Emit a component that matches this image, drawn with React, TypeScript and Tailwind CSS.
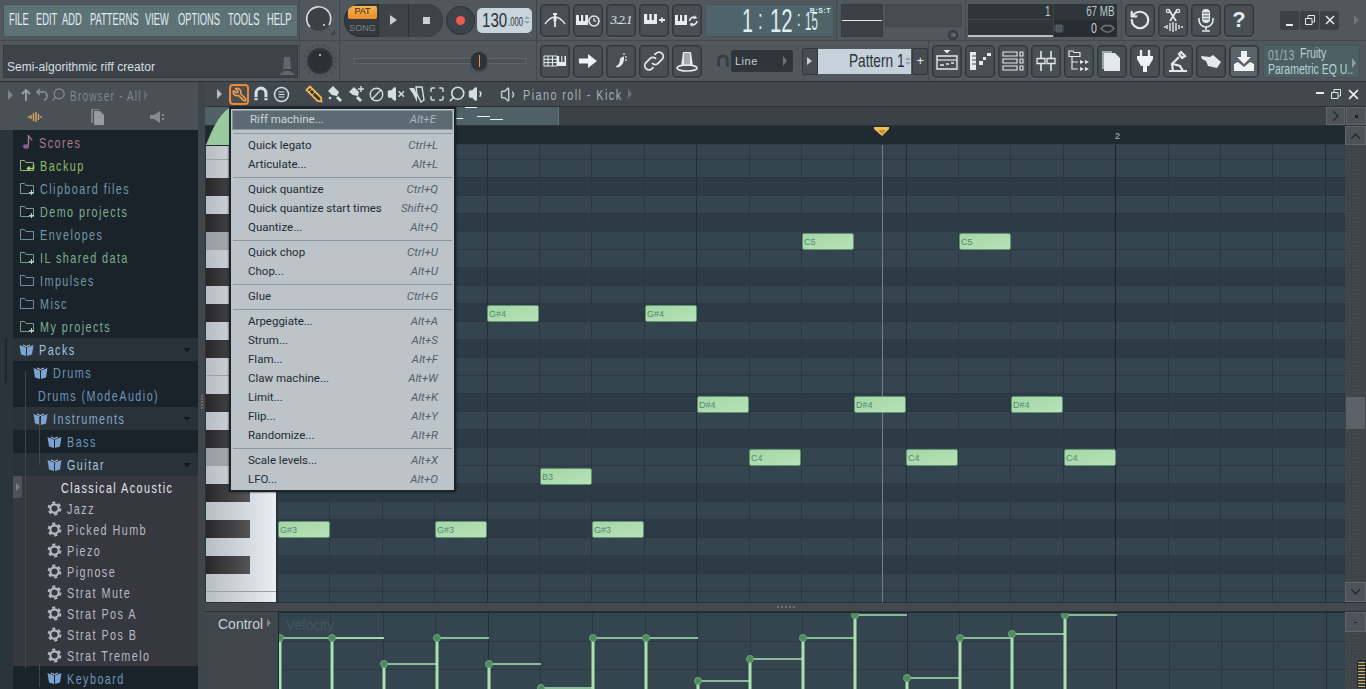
import React from "react";
import { Ban, Maximize, RotateCcw, Search, Volume1, VolumeX, Wrench } from "lucide-react";

const SANS = "font-['Liberation_Sans',Arial,sans-serif]";
const TREE_TEXT = `${SANS} inline-block origin-left whitespace-nowrap scale-x-[.72] text-[15px] tracking-[2px]`;

const MENU_BAR = [
  { label: "FILE", w: "w-[27px]" },
  { label: "EDIT", w: "w-[26px]" },
  { label: "ADD", w: "w-[28px]" },
  { label: "PATTERNS", w: "w-[55px]" },
  { label: "VIEW", w: "w-[33px]" },
  { label: "OPTIONS", w: "w-[50px]" },
  { label: "TOOLS", w: "w-[39px]" },
  { label: "HELP", w: "w-[28px]" },
];

type TreeKind = "score" | "backup" | "folder" | "folderPlus" | "pack" | "preset";

const TREE: { label: string; kind: TreeKind; pad: string; color: string; bg: string; h: string; open?: boolean }[] = [
  { label: "Scores", kind: "score", pad: "pl-[7px]", color: "text-[#b07a90]", bg: "bg-[#1a2329]", h: "h-[24px]" },
  { label: "Backup", kind: "backup", pad: "pl-[7px]", color: "text-[#8fbb6c]", bg: "bg-[#1a2329]", h: "h-[23px]" },
  { label: "Clipboard files", kind: "folderPlus", pad: "pl-[7px]", color: "text-[#7397a8]", bg: "bg-[#1a2329]", h: "h-[23px]" },
  { label: "Demo projects", kind: "folderPlus", pad: "pl-[7px]", color: "text-[#7fae90]", bg: "bg-[#1a2329]", h: "h-[23px]" },
  { label: "Envelopes", kind: "folder", pad: "pl-[7px]", color: "text-[#7397a8]", bg: "bg-[#1a2329]", h: "h-[23px]" },
  { label: "IL shared data", kind: "folderPlus", pad: "pl-[7px]", color: "text-[#7fae90]", bg: "bg-[#1a2329]", h: "h-[23px]" },
  { label: "Impulses", kind: "folder", pad: "pl-[7px]", color: "text-[#7397a8]", bg: "bg-[#1a2329]", h: "h-[23px]" },
  { label: "Misc", kind: "folder", pad: "pl-[7px]", color: "text-[#7397a8]", bg: "bg-[#1a2329]", h: "h-[23px]" },
  { label: "My projects", kind: "folderPlus", pad: "pl-[7px]", color: "text-[#7fae90]", bg: "bg-[#1a2329]", h: "h-[23px]" },
  { label: "Packs", kind: "pack", pad: "pl-[6px]", color: "text-[#a4c3df]", bg: "bg-[#283238]", h: "h-[23px]", open: true },
  { label: "Drums", kind: "pack", pad: "pl-[20px]", color: "text-[#6f93bd]", bg: "bg-[#1a2329]", h: "h-[23px]" },
  { label: "Drums (ModeAudio)", kind: "pack", pad: "pl-[20px]", color: "text-[#6f93bd]", bg: "bg-[#1a2329]", h: "h-[23px]" },
  { label: "Instruments", kind: "pack", pad: "pl-[20px]", color: "text-[#85a8ca]", bg: "bg-[#283238]", h: "h-[23px]", open: true },
  { label: "Bass", kind: "pack", pad: "pl-[34px]", color: "text-[#6f93bd]", bg: "bg-[#1a2329]", h: "h-[23px]" },
  { label: "Guitar", kind: "pack", pad: "pl-[34px]", color: "text-[#a4c3df]", bg: "bg-[#283238]", h: "h-[23px]", open: true },
  { label: "Classical Acoustic", kind: "preset", pad: "pl-[43px]", color: "text-[#e4e6ea]", bg: "bg-[#36373f]", h: "h-[22px]" },
  { label: "Jazz", kind: "preset", pad: "pl-[34px]", color: "text-[#b6bac2]", bg: "bg-[#36373f]", h: "h-[21px]" },
  { label: "Picked Humb", kind: "preset", pad: "pl-[34px]", color: "text-[#b6bac2]", bg: "bg-[#36373f]", h: "h-[21px]" },
  { label: "Piezo", kind: "preset", pad: "pl-[34px]", color: "text-[#b6bac2]", bg: "bg-[#36373f]", h: "h-[21px]" },
  { label: "Pignose", kind: "preset", pad: "pl-[34px]", color: "text-[#b6bac2]", bg: "bg-[#36373f]", h: "h-[21px]" },
  { label: "Strat Mute", kind: "preset", pad: "pl-[34px]", color: "text-[#b6bac2]", bg: "bg-[#36373f]", h: "h-[21px]" },
  { label: "Strat Pos A", kind: "preset", pad: "pl-[34px]", color: "text-[#b6bac2]", bg: "bg-[#36373f]", h: "h-[21px]" },
  { label: "Strat Pos B", kind: "preset", pad: "pl-[34px]", color: "text-[#b6bac2]", bg: "bg-[#36373f]", h: "h-[21px]" },
  { label: "Strat Tremelo", kind: "preset", pad: "pl-[34px]", color: "text-[#b6bac2]", bg: "bg-[#36373f]", h: "h-[21px]" },
  { label: "Keyboard", kind: "pack", pad: "pl-[34px]", color: "text-[#6f93bd]", bg: "bg-[#1a2329]", h: "h-[24px]" },
];

const RIFF_MENU: ({ label: string; keys: string; active?: boolean } | null)[] = [
  { label: "Riff machine...", keys: "Alt+E", active: true },
  null,
  { label: "Quick legato", keys: "Ctrl+L" },
  { label: "Articulate...", keys: "Alt+L" },
  null,
  { label: "Quick quantize", keys: "Ctrl+Q" },
  { label: "Quick quantize start times", keys: "Shift+Q" },
  { label: "Quantize...", keys: "Alt+Q" },
  null,
  { label: "Quick chop", keys: "Ctrl+U" },
  { label: "Chop...", keys: "Alt+U" },
  null,
  { label: "Glue", keys: "Ctrl+G" },
  null,
  { label: "Arpeggiate...", keys: "Alt+A" },
  { label: "Strum...", keys: "Alt+S" },
  { label: "Flam...", keys: "Alt+F" },
  { label: "Claw machine...", keys: "Alt+W" },
  { label: "Limit...", keys: "Alt+K" },
  { label: "Flip...", keys: "Alt+Y" },
  { label: "Randomize...", keys: "Alt+R" },
  null,
  { label: "Scale levels...", keys: "Alt+X" },
  { label: "LFO...", keys: "Alt+O" },
];

const KEYS = ["F5", "E5", "D#5", "D5", "C#5", "C5", "B4", "A#4", "A4", "G#4", "G4", "F#4", "F4", "E4", "D#4", "D4", "C#4", "C4", "B3", "A#3", "A3", "G#3", "G3", "F#3", "F3", "E3"];

const NOTES = [
  { n: "C5", x: 524, y: 88 }, { n: "C5", x: 681, y: 88 },
  { n: "G#4", x: 209, y: 160 }, { n: "G#4", x: 367, y: 160 },
  { n: "D#4", x: 419, y: 251 }, { n: "D#4", x: 576, y: 251 }, { n: "D#4", x: 733, y: 251 },
  { n: "C4", x: 471, y: 304 }, { n: "C4", x: 628, y: 304 }, { n: "C4", x: 786, y: 304 },
  { n: "B3", x: 262, y: 323 },
  { n: "G#3", x: 0, y: 376 }, { n: "G#3", x: 157, y: 376 }, { n: "G#3", x: 314, y: 376 },
];

// note x, stem top, end of the level line (velocity lane coordinates)
const VELOCITY = [
  [1, 25, 105], [53, 25, 105], [105, 51, 157], [158, 25, 210], [210, 51, 262], [262, 75, 314], [314, 25, 367],
  [367, 25, 419], [419, 68, 471], [471, 46, 524], [524, 25, 576], [576, 2, 628], [628, 65, 681], [681, 25, 733],
  [733, 21, 786], [786, 2, 838],
];

const COLS = Array.from({ length: 21 }, (_, i) => i);

function Squeezed({ children, className }: { children: React.ReactNode; className: string }) {
  return <span className={`${SANS} inline-block origin-left whitespace-nowrap ${className}`}>{children}</span>;
}

function ToolBtn({ children, light }: { children: React.ReactNode; light?: boolean }) {
  return (
    <div className={`flex h-[33px] w-[30px] shrink-0 items-center justify-center rounded-[4px] border border-[#31383d] shadow-[inset_0_0_0_1px_#3c4349,0_1px_0_#5d656b] ${light ? "bg-[#5a6469]" : "bg-[#484f55]"}`}>
      {children}
    </div>
  );
}

function Ico({ children, size = 24 }: { children: React.ReactNode; size?: number }) {
  return (
    <svg width={size} height={size} viewBox="0 0 24 24" fill="none" stroke="#e2eaec" strokeWidth="2">
      {children}
    </svg>
  );
}

function KeysGlyph({ x, y, w = 13 }: { x: number; y: number; w?: number }) {
  return (
    <g stroke="none">
      <rect x={x} y={y} width={w} height="10" fill="#e6edef" />
      <rect x={x + w * 0.25} y={y} width="2" height="6" fill="#3c4349" />
      <rect x={x + w * 0.6} y={y} width="2" height="6" fill="#3c4349" />
    </g>
  );
}

function Magnet({ size = 20, color = "#cfe0e8" }: { size?: number; color?: string }) {
  return (
    <svg width={size} height={size} viewBox="0 0 20 20" fill="none">
      <path d="M4.5 17V9a5.5 5.5 0 0 1 11 0v8" stroke={color} strokeWidth="3.4" />
      <path d="M2.8 14h3.4M13.8 14h3.4" stroke="#2e3439" strokeWidth="1" />
    </svg>
  );
}

function TreeIcon({ kind }: { kind: TreeKind }) {
  if (kind === "score")
    return (
      <svg width="14" height="16" viewBox="0 0 14 16" fill="none">
        <path d="M8.5 1v10.5" stroke="#b07a90" strokeWidth="1.4" />
        <path d="M8.5 1.5c1 2.5 3 3 3.5 5" stroke="#b07a90" strokeWidth="1.2" />
        <ellipse cx="6" cy="12.5" rx="3" ry="2.2" fill="#8a5c8c" />
      </svg>
    );
  if (kind === "pack")
    return (
      <svg width="15" height="12" viewBox="0 0 15 12">
        <path d="M0.5 1 7 3.5V12L2 10.5ZM14.5 1 8 3.5V12l5-1.5Z" fill="#7ba3d0" />
        <path d="M4 1.5 7.5 3 11 1.5V0.5L7.5 2 4 0.5Z" fill="#b9d2ea" />
      </svg>
    );
  if (kind === "preset")
    return (
      <svg width="15" height="15" viewBox="0 0 16 16" fill="none" stroke="#b8bcc4">
        <circle cx="8" cy="8" r="4.4" strokeWidth="2.2" />
        <circle cx="8" cy="8" r="6.4" strokeWidth="2" strokeDasharray="3.4 3.3" />
      </svg>
    );
  const stroke = kind === "backup" ? "#8fbb6c" : kind === "folderPlus" ? "#73a08c" : "#6f8fa0";
  return (
    <svg width="15" height="13" viewBox="0 0 15 13" fill="none" stroke={stroke}>
      <path d="M0.5 11.5v-10h4l1.5 2h7.5v8Z" />
      {kind === "folderPlus" && <path d="M9 10.5h5M11.5 8v5" stroke="#c0d4d8" />}
      {kind === "backup" && <path d="M13.5 5.5v4h-6M9.5 7.5l-2 2 2 2" strokeWidth="1.6" stroke="#a8d070" />}
    </svg>
  );
}

function Toolbar() {
  return (
    <div className="flex h-[82px] shrink-0 flex-col border-b border-[#2b3237] bg-[#50585e] text-[#e2eaec]">
      {/* top row */}
      <div className="flex h-[41px] border-b border-[#42494f]">
        <div className="flex w-[300px] shrink-0 items-center border-r border-[#42494f] pl-[3px]">
          <div className="flex h-[33px] w-[295px] items-center border border-[#46545a] bg-[#5e7275] pl-[5px]">
            {MENU_BAR.map((m) => (
              <div key={m.label} className={`${m.w} shrink-0`}>
                <Squeezed className="scale-x-[.55] text-[17px] text-[#e0eef3]">{m.label}</Squeezed>
              </div>
            ))}
          </div>
        </div>
        <div className="flex w-[40px] shrink-0 items-center justify-center border-r border-[#42494f]">
          <svg width="32" height="32" viewBox="0 0 32 32" fill="none">
            <circle cx="15" cy="15" r="12" fill="#3a4147" />
            <path d="M6 23a12 12 0 1 1 19-2" stroke="#d4dadd" strokeWidth="1.6" />
            <circle cx="20" cy="21" r="1" fill="#d8dde0" />
            <path d="M31 26v5h-5Z" fill="#3a4147" />
          </svg>
        </div>
        <div className="flex w-[197px] shrink-0 items-center border-r border-[#3b4248] pl-[4px]">
          <div className="flex h-[33px] w-[99px] overflow-hidden rounded-full bg-[#33393f] shadow-[inset_0_0_0_1px_#2a3035]">
            <div className="flex w-[34px] flex-col items-center pl-[3px] pt-[2px]">
              <div className="flex h-[13px] w-[29px] items-center justify-center rounded-[2px] bg-gradient-to-b from-[#f6b44e] to-[#e98c2a] text-[9px] text-[#33281a]">
                <span className={SANS}>PAT</span>
              </div>
              <span className={`${SANS} mt-[3px] text-[9px] text-[#7b8389]`}>SONG</span>
            </div>
            <div className="flex w-[31px] items-center justify-center border-x border-[#2a3035] bg-[#3c4349]">
              <div className="h-0 w-0 border-y-[5px] border-l-[7px] border-y-transparent border-l-[#c8ced2]" />
            </div>
            <div className="flex flex-1 items-center justify-center bg-[#3c4349]">
              <div className="h-[7px] w-[7px] bg-[#c8d0d6]" />
            </div>
          </div>
          <div className="ml-[3px] flex h-[29px] w-[29px] items-center justify-center rounded-full border border-[#2c3237] bg-[#3c4349]">
            <div className="h-[9px] w-[9px] rounded-full bg-[#f05a55]" />
          </div>
          <div className="ml-[2px] flex h-[25px] w-[55px] items-center rounded-[5px] bg-[#c9d5dc] pl-[5px] text-[#2a3238]">
            <div className="w-[26px]"><Squeezed className="scale-x-[.72] text-[21px]">130</Squeezed></div>
            <div className="w-[16px]"><Squeezed className="scale-x-[.65] text-[12px]">.000</Squeezed></div>
            <div className="flex flex-col gap-[2px]">
              <div className="h-0 w-0 border-x-[3px] border-b-[3px] border-x-transparent border-b-[#98a2a8]" />
              <div className="h-0 w-0 border-x-[3px] border-t-[3px] border-x-transparent border-t-[#98a2a8]" />
            </div>
          </div>
        </div>
        <div className="flex w-[300px] shrink-0 items-center gap-[3px] border-r border-[#42494f] pl-[3px]">
          <ToolBtn>
            <Ico>
              <path d="M2 16Q7 9 12 9t10 7" strokeWidth="1.4" />
              <path d="M12 5v14M10 6h4" strokeWidth="1.8" />
              <path d="M10.5 10h3v3h-3Z" fill="#e2eaec" stroke="none" />
            </Ico>
          </ToolBtn>
          <ToolBtn>
            <Ico>
              <KeysGlyph x={0} y={7} w={12} />
              <circle cx="18" cy="13" r="5" strokeWidth="1.6" />
              <path d="M18 10v3h2.5" strokeWidth="1.2" />
            </Ico>
          </ToolBtn>
          <ToolBtn>
            <span className="font-['Liberation_Serif',serif] text-[13px] italic tracking-[-1px]">3.2.1</span>
          </ToolBtn>
          <ToolBtn>
            <Ico>
              <KeysGlyph x={2} y={6} w={13} />
              <path d="M17 12h6M20 9.5v5" strokeWidth="1.8" />
            </Ico>
          </ToolBtn>
          <ToolBtn>
            <Ico>
              <KeysGlyph x={0} y={7} w={12} />
              <path d="M14.5 13a4 4 0 0 1 6-3.2M22 13a4 4 0 0 1-6 3.2" strokeWidth="1.7" />
              <path d="M19.5 7.5l2 2.5-3 .5M17 18.5l-2-2.5 3-.5" strokeWidth="1" />
            </Ico>
          </ToolBtn>
          <div className="relative flex h-[33px] w-[129px] items-center border border-[#46545a] bg-[#4f6468] pl-[36px] text-[#dceef6]">
            <div className="w-[38px]"><Squeezed className="scale-x-[.58] text-[34px] leading-none">1</Squeezed></div>
            <div className="w-[0px]" />
            <div className="-ml-[20px] w-[12px]"><Squeezed className="scale-x-[.6] text-[28px] leading-none">:</Squeezed></div>
            <div className="w-[27px]"><Squeezed className="scale-x-[.6] text-[34px] leading-none">12</Squeezed></div>
            <div className="w-[9px]"><Squeezed className="scale-x-[.6] text-[22px] leading-none">:</Squeezed></div>
            <div><Squeezed className="mt-[5px] scale-x-[.46] text-[25px] leading-none">15</Squeezed></div>
            <span className={`${SANS} absolute right-[2px] top-[1px] text-[7px] font-bold tracking-[.5px] text-[#dceef6]`}>B:S:T</span>
          </div>
        </div>
        <div className="flex w-[129px] shrink-0 gap-[2px] border-r border-[#42494f] pl-[4px] pt-[4px]">
          <div className="flex h-[33px] w-[42px] items-center border border-[#353c41] bg-[#3b4247]">
            <div className="h-[1px] w-full bg-[#e4e8ea]" />
          </div>
          <div className="relative h-[23px] w-[77px] border border-[#40474c] bg-[#454c52]">
            <svg className="absolute left-[59px] top-[24px]" width="16" height="12" viewBox="0 0 16 12" fill="none">
              <circle cx="8" cy="6" r="4" stroke="#373e43" strokeWidth="2.4" />
              <circle cx="9" cy="6" r="1.5" fill="#6a7278" />
            </svg>
          </div>
        </div>
        <div className="flex w-[156px] shrink-0 items-center border-r border-[#42494f] pl-[2px]">
          <div className="grid h-[33px] w-[149px] grid-cols-[86px_63px] grid-rows-2 bg-[#262d33]">
            <div className="flex items-center justify-end border-b border-r border-[#3c4349] bg-[#2e353b] pr-[2px]">
              <Squeezed className="w-[6px] scale-x-[.7] text-[14px] text-[#bcc8cc]">1</Squeezed>
            </div>
            <div className="flex items-center justify-end bg-[#2e353b] pr-[3px]">
              <Squeezed className="origin-right! scale-x-[.7] text-[14px] text-[#bcc8cc]">67 MB</Squeezed>
            </div>
            <div className="flex items-end border-r border-[#3c4349] bg-[#2e353b]">
              <div className="h-[2px] w-full bg-[#b8c0c4]" />
            </div>
            <div className="flex items-center justify-end gap-[2px] pr-[2px]">
              <svg className="mr-[25px]" width="10" height="9" viewBox="0 0 10 9"><path d="M2 1h6v7H2ZM0 2h1M0 4h1M0 6h1M9 2h1M9 4h1M9 6h1" stroke="#5a646a" fill="#4d565c" /></svg>
              <Squeezed className="w-[7px] scale-x-[.7] text-[15px] text-[#c8d2d6]">0</Squeezed>
              <svg width="15" height="9" viewBox="0 0 15 9" fill="none"><path d="M1 4.5Q5 0 7.5 2 10 0 14 4.5 10 8.5 7.5 8 5 8.5 1 4.5Z" stroke="#6a7278" strokeWidth="1.5" /></svg>
            </div>
          </div>
        </div>
        <div className="flex flex-1 items-center gap-[3px] pl-[3px]">
          <ToolBtn><RotateCcw size={22} strokeWidth={2.4} color="#e2eaec" /></ToolBtn>
          <ToolBtn>
            <Ico>
              <path d="M8 2l7 11M16 2L9 13" strokeWidth="1.8" />
              <circle cx="7" cy="3" r="1.7" strokeWidth="1.2" /><circle cx="17" cy="3" r="1.7" strokeWidth="1.2" />
              <path d="M3 19h2M6 17v4M9 15v8M12 14v10M15 15v8M18 17v4M20 19h2" strokeWidth="1.4" />
            </Ico>
          </ToolBtn>
          <ToolBtn>
            <Ico>
              <rect x="8" y="1" width="8" height="14" rx="4" fill="#e2eaec" stroke="none" />
              <path d="M9 5h6M9 8h6M9 11h6" stroke="#484f55" strokeWidth="1" />
              <path d="M5 10v2a7 7 0 0 0 14 0v-2M12 19v3M8 23h8" strokeWidth="1.6" />
            </Ico>
          </ToolBtn>
          <ToolBtn><span className={`${SANS} text-[22px] font-bold leading-none text-[#e2eaec]`}>?</span></ToolBtn>
          <div className="ml-[23px] flex items-center gap-[1px]">
            <div className="flex h-[19px] w-[19px] items-end justify-center rounded-[2px] bg-[#3a4147] pb-[4px]"><div className="h-[2px] w-[7px] bg-[#e2eaec]" /></div>
            <div className="flex h-[19px] w-[19px] items-center justify-center rounded-[2px] bg-[#3a4147]">
              <svg width="10" height="10" viewBox="0 0 10 10" fill="none" stroke="#e2eaec"><path d="M3 3V.5h6.5V7H7M.5 3.5H7v6H.5Z" /></svg>
            </div>
            <div className="flex h-[19px] w-[19px] items-center justify-center rounded-[2px] bg-[#3a4147]">
              <svg width="10" height="10" viewBox="0 0 10 10" fill="none" stroke="#e2eaec" strokeWidth="1.5"><path d="M1 1l8 8M9 1l-8 8" /></svg>
            </div>
          </div>
          <div className="ml-[12px] h-0 w-0 border-y-[5px] border-l-[5px] border-y-transparent border-l-[#6e767c]" />
        </div>
      </div>
      {/* bottom row */}
      <div className="flex flex-1">
        <div className="flex w-[300px] shrink-0 items-center border-r border-[#42494f] pl-[3px]">
          <div className="flex h-[33px] w-[295px] items-end justify-between border border-[#353c41] bg-[#3c444a] pb-[1px] pl-[3px] pr-[2px]">
            <span className={`${SANS} text-[12px] tracking-[.05px] text-[#d8dfe3]`}>Semi-algorithmic riff creator</span>
            <svg width="16" height="20" viewBox="0 0 16 20"><path d="M5 1h6l1 12H4Z" fill="#5f676d" /><path d="M1 18q7-7 14 0v1H1Z" fill="#5f676d" /></svg>
          </div>
        </div>
        <div className="flex w-[40px] shrink-0 items-center justify-center border-r border-[#42494f]">
          <svg width="36" height="36" viewBox="0 0 36 36" fill="none">
            <circle cx="18" cy="18" r="16" stroke="#3c4349" strokeWidth="1.5" strokeDasharray="1.5 4.5" />
            <circle cx="18" cy="18" r="13" fill="#31373c" stroke="#3c4349" />
            <circle cx="18" cy="18" r="11" fill="#2a3035" />
            <circle cx="18" cy="12" r="1" fill="#d8dde0" />
          </svg>
        </div>
        <div className="flex w-[197px] shrink-0 items-center border-r border-[#42494f] pl-[14px]">
          <div className="relative h-[6px] w-[172px] border border-[#5d656b] bg-[#4a5157]">
            <div className="absolute left-[116px] top-[-7px] flex h-[18px] w-[16px] items-center justify-center rounded-full bg-[#2d3338] shadow-[0_2px_2px_#3c4349]">
              <div className="h-[12px] w-[1px] bg-[#f0963c]" />
            </div>
          </div>
        </div>
        <div className="flex w-[392px] shrink-0 items-center gap-[3px] border-r border-[#42494f] pl-[3px]">
          <ToolBtn>
            <Ico>
              <path d="M1 7h13v10H1ZM1 10.3h13M1 13.6h13M5 7v10M9.5 7v10" strokeWidth="1" />
              <KeysGlyph x={14} y={7} w={9} />
            </Ico>
          </ToolBtn>
          <ToolBtn>
            <Ico><path d="M3 9.5h9V5l9 7-9 7v-4.500H3Z" fill="#f0f4f5" stroke="none" /></Ico>
          </ToolBtn>
          <ToolBtn>
            <Ico>
              <path d="M15 8c0 5-1 8-5 10-2 1-3 0-3-1 2 0 4-3 4-7 1-2 4-3 4-2Z" fill="#e2eaec" stroke="none" />
              <circle cx="17" cy="8" r="1" fill="#c0c8cc" stroke="none" /><circle cx="17" cy="11" r="1" fill="#c0c8cc" stroke="none" /><circle cx="15" cy="5" r="1" fill="#c0c8cc" stroke="none" />
            </Ico>
          </ToolBtn>
          <ToolBtn>
            <Ico>
              <path d="M10 14a4 4 0 0 0 6 .4l4-4a4 4 0 0 0-6-6l-1.500 1.500" strokeWidth="1.8" />
              <path d="M14 10a4 4 0 0 0-6-.4l-4 4a4 4 0 0 0 6 6l1.500-1.500" strokeWidth="1.8" />
            </Ico>
          </ToolBtn>
          <ToolBtn>
            <Ico>
              <path d="M8 3h8l2 14H6Z" fill="#e2eaec" stroke="none" />
              <path d="M10 4v12M12 4v12M14 4v12" stroke="#6a7278" strokeWidth="1" />
              <ellipse cx="12" cy="19" rx="10" ry="3" strokeWidth="1.6" />
            </Ico>
          </ToolBtn>
          <div className="ml-[10px] w-[13px]"><Magnet size={16} color="#363d42" /></div>
          <div className="flex h-[22px] w-[63px] items-center justify-between rounded-[2px] border border-[#31383d] bg-[#2f363b] pl-[3px] pr-[5px]">
            <span className={`${SANS} text-[11px] tracking-[.5px] text-[#c6ced2]`}>Line</span>
            <div className="h-0 w-0 border-y-[5px] border-l-[4px] border-y-transparent border-l-[#6b7379]" />
          </div>
          <div className="ml-[6px] flex h-[27px] w-[17px] items-center justify-center rounded-[2px] border border-[#31383d] bg-[#454c52]">
            <div className="h-0 w-0 border-y-[4px] border-l-[5px] border-y-transparent border-l-[#c8ced2]" />
          </div>
          <div className="-ml-[3px] flex h-[25px] w-[95px] items-center bg-[#c6d2da] pl-[31px] text-[#2a3238]">
            <div className="w-[56px]"><Squeezed className="scale-x-[.72] text-[19px]">Pattern 1</Squeezed></div>
            <div className="flex flex-col gap-[2px]">
              <div className="h-0 w-0 border-x-[3px] border-b-[3px] border-x-transparent border-b-[#98a2a8]" />
              <div className="h-0 w-0 border-x-[3px] border-t-[3px] border-x-transparent border-t-[#98a2a8]" />
            </div>
          </div>
          <div className="-ml-[2px] flex h-[27px] w-[16px] items-center justify-center rounded-[2px] border border-[#31383d] bg-[#454c52] text-[13px] text-[#e2eaec]">
            <span className={SANS}>+</span>
          </div>
        </div>
        <div className="flex flex-1 items-center gap-[3px] pl-[3px]">
          <ToolBtn>
            <Ico>
              <path d="M8.500 1h7L12 4.500Z" fill="#e2eaec" stroke="none" />
              <path d="M2 7h20v13H2Z" strokeWidth="1.4" /><path d="M2 11h20" strokeWidth="1.200" />
              <path d="M5 16h4M11 15h3M16 14h3" strokeWidth="1.4" />
            </Ico>
          </ToolBtn>
          <ToolBtn>
            <Ico>
              <path d="M2 3h6v18H2Z" fill="#e2eaec" stroke="none" />
              <path d="M4 7h4M4 11h4M4 15h4" stroke="#484f55" strokeWidth="1" />
              <path d="M11 12h4v4h-4ZM15 8h3v3h-3ZM19 4h4v3h-4Z" fill="#e2eaec" stroke="none" />
            </Ico>
          </ToolBtn>
          <ToolBtn>
            <Ico>
              <path d="M2 3h14v4H2ZM2 10h14v4H2ZM2 17h14v4H2ZM19 3h3v4h-3ZM19 10h3v4h-3ZM19 17h3v4h-3Z" strokeWidth="1.100" />
            </Ico>
          </ToolBtn>
          <ToolBtn>
            <Ico>
              <path d="M7 2v7M7 15v7M17 2v7M17 15v7" strokeWidth="1.600" />
              <path d="M3 9.500h8v5H3ZM13 9.500h8v5h-8Z" strokeWidth="1.300" />
            </Ico>
          </ToolBtn>
          <ToolBtn>
            <Ico>
              <path d="M2 2h4l1 1.500h6v4H2ZM5 7v13h6M5 13h6" strokeWidth="1.200" />
              <path d="M13 11l4 2-4 2ZM18 11l4 2-4 2ZM13 18l4 2-4 2ZM18 18l4 2-4 2Z" fill="#e2eaec" stroke="none" />
            </Ico>
          </ToolBtn>
          <ToolBtn>
            <Ico>
              <path d="M4 4v18h16V9l-5-5Z" fill="#e2eaec" stroke="none" />
              <path d="M2 2h10v2H4v16H2Z" fill="#9aa4a9" stroke="none" />
            </Ico>
          </ToolBtn>
          <ToolBtn>
            <Ico>
              <path d="M8 1v6M16 1v6" strokeWidth="2.4" />
              <path d="M4 7h16v3l-4 7h-2v6h-4v-6H8l-4-7Z" fill="#f0f4f5" stroke="none" />
            </Ico>
          </ToolBtn>
          <ToolBtn>
            <Ico>
              <path d="M15 3l4 4-3 2-3-4ZM13 8l-7 7 1 7M7 15l7 2 3 5" strokeWidth="2.200" />
              <path d="M3 22h18" strokeWidth="2" />
            </Ico>
          </ToolBtn>
          <ToolBtn>
            <Ico><path d="M2 7l9 1 3-2 8 7-4 6-9-2-2-5-4-2Z" fill="#e2eaec" stroke="none" /></Ico>
          </ToolBtn>
          <ToolBtn light>
            <Ico>
              <path d="M9 2h6v6h4l-7 7-7-7h4Z" fill="#f0f4f5" stroke="none" />
              <path d="M2 15l4-2 6 5 6-5 4 2v7H2Z" fill="#f0f4f5" stroke="none" />
            </Ico>
          </ToolBtn>
          <div className="relative ml-[1px] h-[33px] w-[97px] border border-[#46545a] bg-[#4d6063] pl-[4px] text-[#b8d2d6]">
            <div className="flex h-[16px] items-center">
              <div className="w-[32px]"><Squeezed className="scale-x-[.75] text-[14px] text-[#9ab4b8]">01/13</Squeezed></div>
              <Squeezed className="scale-x-[.75] text-[14px]">Fruity</Squeezed>
            </div>
            <div className="flex h-[15px] items-center">
              <Squeezed className="scale-x-[.75] text-[14px]">Parametric EQ U..</Squeezed>
            </div>
            <div className="absolute right-[3px] top-[12px] h-0 w-0 border-y-[5px] border-l-[4px] border-y-transparent border-l-[#8aa0a4]" />
          </div>
        </div>
      </div>
    </div>
  );
}

function Browser() {
  return (
    <div className="flex w-[205px] shrink-0">
      <div className="flex w-[198px] flex-col overflow-hidden">
        <div className="flex h-[48px] shrink-0 flex-col bg-[#495157] text-[#8e969c]">
          <div className="flex h-[24px] items-center pl-[8px] pt-[1px]">
            <div className="h-0 w-0 border-y-[5px] border-l-[5px] border-y-transparent border-l-[#7d858b]" />
            <svg className="ml-[7px]" width="12" height="14" viewBox="0 0 12 14" fill="none" stroke="#9aa2a8" strokeWidth="1.800"><path d="M6 13V2M2 6l4-4 4 4" /></svg>
            <svg className="ml-[3px]" width="13" height="14" viewBox="0 0 13 14" fill="none" stroke="#8a9298" strokeWidth="1.600"><path d="M5 1L2 4l3 3M2 4h5a4 4 0 0 1 2 8" /></svg>
            <Search className="ml-[3px] -scale-x-100" size={15} color="#8a9298" strokeWidth={1.700} />
            <div className="ml-[4px] w-[74px]"><Squeezed className="scale-x-[.72] text-[14px] tracking-[1.600px] text-[#7f878d]">Browser - All</Squeezed></div>
            <div className="h-0 w-0 border-y-[5px] border-l-[4px] border-y-transparent border-l-[#626a70]" />
          </div>
          <div className="flex h-[24px] items-center pl-[27px] pb-[3px]">
            <svg width="16" height="12" viewBox="0 0 16 12" stroke="#d8a85c" strokeWidth="1.400"><path d="M1 6h2M4 4v4M6.500 2v8M9 1v10M11.500 3v6M14 5v2" /></svg>
            <svg className="ml-[48px]" width="13" height="16" viewBox="0 0 13 16"><path d="M0 0h8l1 1H2v13H0Z" fill="#7a8288" /><path d="M3 2h6l4 4v10H3Z" fill="#949ca2" /></svg>
            <svg className="ml-[46px]" width="16" height="12" viewBox="0 0 16 12"><path d="M0 4h4l6-4v12L4 8H0Z" fill="#848c92" /><path d="M12 3h2v2h-2ZM12 7h2v2h-2Z" fill="#848c92" /></svg>
          </div>
        </div>
        <div className="relative flex-1">
          <div className="absolute inset-y-0 left-0 w-[13px] bg-[#2b343b]">
            <div className="absolute left-[5px] top-[208px] h-[45px] w-[2px] bg-[#1e252b]" />
          </div>
          <div className="ml-[13px]">
            {TREE.map((item) => (
              <div key={item.label} className={`relative flex items-center ${item.h} ${item.bg} ${item.pad}`}>
                <TreeIcon kind={item.kind} />
                <div className={`ml-[5px] ${item.color}`}><span className={TREE_TEXT}>{item.label}</span></div>
                {item.open && <div className="absolute right-[7px] top-[10px] h-0 w-0 border-x-[4px] border-t-[4px] border-x-transparent border-t-[#11181d]" />}
                {item.label === "Classical Acoustic" && (
                  <div className="absolute left-0 top-0 flex h-full w-[9px] items-center justify-center bg-[#4f5058]">
                    <div className="h-0 w-0 border-y-[4px] border-l-[4px] border-y-transparent border-l-[#7c7d85]" />
                  </div>
                )}
              </div>
            ))}
          </div>
          <div className="absolute left-[25px] top-[241px] h-[297px] w-[1px] bg-[#3c464d]" />
          <div className="absolute left-[39px] top-[287px] h-[48px] w-[1px] bg-[#3c464d]" />
          <div className="absolute left-[39px] top-[534px] h-[23px] w-[1px] bg-[#3c464d]" />
        </div>
      </div>
      <div className="flex w-[7px] flex-col items-center gap-[1px] bg-[#3e464c] pt-[313px]">
        {[0, 1, 2, 3, 4].map((i) => (
          <div key={i} className="h-[2px] w-[2px] bg-[#646c72]" />
        ))}
      </div>
    </div>
  );
}

function ColumnLines() {
  return (
    <div className="absolute inset-0 flex">
      {COLS.map((i) => (
        <div key={i} className={`h-full w-[52.4px] shrink-0 border-r ${i === 15 ? "border-[#17222a]" : (i + 1) % 4 === 0 ? "border-[#22303a]" : "border-[#293843]"}`} />
      ))}
    </div>
  );
}

function PianoRoll() {
  return (
    <div className="flex min-w-0 flex-1 flex-col bg-[#41484e]">
      {/* tool strip */}
      <div className="flex h-[24px] shrink-0 items-center pl-[12px] text-[#d8e2e6]">
        <div className="h-0 w-0 border-y-[5px] border-l-[5px] border-y-transparent border-l-[#b4bcc0]" />
        <div className="ml-[7px] flex h-[21px] w-[20px] items-center justify-center rounded-[4px] border-2 border-[#ee8a34] bg-[#4a4d50]">
          <Wrench size={15} color="#f4a050" strokeWidth={2.400} className="-scale-x-100" />
        </div>
        <div className="ml-[3px]"><Magnet size={18} /></div>
        <svg className="ml-[3px]" width="17" height="17" viewBox="0 0 17 17" fill="none" stroke="#cfe0e8">
          <circle cx="8.500" cy="8.500" r="7" strokeWidth="1.500" />
          <path d="M5.500 6h6M5.500 8.500h6M5.500 11h6" strokeWidth="1.200" />
        </svg>
        <svg className="ml-[15px]" width="18" height="18" viewBox="0 0 18 18" fill="none">
          <path d="M1.500 5L5 1.500l11 11L16.500 16.500 12.500 16Z" fill="#3d3a30" stroke="#f0b858" strokeWidth="1.800" />
          <path d="M4 7l3-3M7 10l3-3" stroke="#f0b858" />
        </svg>
        <svg className="ml-[3px]" width="18" height="18" viewBox="0 0 18 18">
          <path d="M2 6l5-5 6 6-2 4-5-1Z" fill="#d4dee2" />
          <path d="M12 11l4 4-2 2-4-4Z" fill="#d4dee2" />
          <circle cx="4" cy="13" r="1.300" fill="#d4dee2" />
        </svg>
        <svg className="ml-[3px]" width="18" height="18" viewBox="0 0 18 18">
          <path d="M2 7l5-5 5 5-1 4-5-1Z" fill="#d4dee2" />
          <path d="M11 11l4 4-2 2-4-4Z" fill="#d4dee2" />
          <path d="M14 1v6M11 4h6" stroke="#d4dee2" strokeWidth="1.400" />
        </svg>
        <Ban className="ml-[4px] -scale-x-100" size={15} color="#d4dee2" strokeWidth={2.200} />
        <VolumeX className="ml-[3px]" size={18} color="#d4dee2" fill="#d4dee2" strokeWidth={2} />
        <svg className="ml-[3px]" width="18" height="18" viewBox="0 0 18 18">
          <path d="M1 3h5l3 6v8L5 9Z" fill="#d4dee2" />
          <path d="M8 2h6l2 13-3 2-4-8Z" fill="none" stroke="#d4dee2" strokeWidth="1.400" />
        </svg>
        <Maximize className="ml-[3px]" size={16} color="#d4dee2" strokeWidth={2.200} />
        <Search className="ml-[3px] -scale-x-100" size={18} color="#d4dee2" strokeWidth={2.200} />
        <Volume1 className="ml-[2px]" size={18} color="#d4dee2" fill="#d4dee2" strokeWidth={2} />
        <Volume1 className="ml-[14px]" size={19} color="#c2ccd0" strokeWidth={1.800} />
        <div className="ml-[4px] w-[105px]"><span className={`${TREE_TEXT} text-[#a8b2b8]`}>Piano roll - Kick</span></div>
        <div className="h-0 w-0 border-y-[5px] border-l-[4px] border-y-transparent border-l-[#6a7278]" />
        <div className="ml-auto flex items-center gap-[7px] pr-[7px]">
          <div className="mb-[2px] h-[2px] w-[8px] bg-[#e4ecee]" />
          <svg width="10" height="10" viewBox="0 0 10 10" fill="none" stroke="#dbe8e4"><path d="M3 3V.5h6.500V7H7M.5 3.500H7v6H.5Z" /></svg>
          <svg width="11" height="11" viewBox="0 0 10 10" fill="none" stroke="#e8eef2" strokeWidth="1.500"><path d="M1 1l8 8M9 1l-8 8" /></svg>
        </div>
      </div>
      {/* overview strip */}
      <div className="flex h-[20px] shrink-0 border-y border-[#2b3237] bg-[#3a4147]">
        <div className="relative w-[354px] border-r border-[#66747a] bg-[#4f6066]">
          <div className="absolute left-[260px] top-[0px] h-[1px] w-[12px] bg-[#e6f4ea]" />
          <div className="absolute left-[250px] top-[11px] h-[1px] w-[8px] bg-[#e6f4ea]" />
          <div className="absolute left-[272px] top-[9px] h-[1px] w-[13px] bg-[#e6f4ea]" />
          <div className="absolute left-[285px] top-[12px] h-[1px] w-[13px] bg-[#e6f4ea]" />
        </div>
        <div className="ml-auto flex gap-[1px]">
          <div className="flex h-[18px] w-[19px] items-center justify-center border border-[#5f676d] bg-[#4d5359]">
            <svg width="7" height="10" viewBox="0 0 7 10" fill="none" stroke="#23292e" strokeWidth="1.200"><path d="M1 0l5 5-5 5" /></svg>
          </div>
          <div className="flex h-[18px] w-[20px] items-center justify-center border border-[#5f676d] bg-[#4d5359]">
            <div className="h-[3px] w-[3px] bg-[#1c2227]" />
          </div>
        </div>
      </div>
      {/* ruler */}
      <div className="flex h-[19px] shrink-0 border-b border-[#2f3d47] bg-[#1f2a31]">
        <div className="relative flex-1">
          <span className={`${SANS} absolute left-[910px] top-[4px] text-[9px] font-bold text-[#8e9aa0]`}>2</span>
          <svg className="absolute left-[669px] top-0" width="16" height="11" viewBox="0 0 16 11"><path d="M0 1h15v2l-7 7-8-7Z" fill="#f0bc5c" /><path d="M4 4h8l-4 4Z" fill="#c98a2e" /></svg>
        </div>
        <div className="flex h-[19px] w-[21px] items-center justify-center border border-[#5f676d] bg-[#4d5359]">
          <svg width="11" height="6" viewBox="0 0 11 6" fill="none" stroke="#1f2529" strokeWidth="1.200"><path d="M1 6l4.500-5L10 6" /></svg>
        </div>
      </div>
      {/* note area */}
      <div className="flex h-[457px] shrink-0 overflow-hidden">
        <div className="relative w-[73px] shrink-0 border-l border-[#2b3237]">
          <div className="-mt-[3px] border-r-2 border-[#2b3237]">
            {KEYS.map((k) => {
              const sharp = k.includes("#");
              const isC = k[0] === "C" && !sharp;
              const isF = k[0] === "F" && !sharp;
              return (
                <div key={k} className={`h-[18px] ${isC ? "bg-gradient-to-r from-[#9a9ea5] to-[#b2b6bd]" : "bg-gradient-to-r from-[#b9bdc4] to-[#e9edf4]"} ${isC || isF ? "border-b border-[#9aa0a6]" : ""}`}>
                  {sharp && <div className="h-full w-[44px] bg-gradient-to-r from-[#28282a] to-[#555557]" />}
                </div>
              );
            })}
          </div>
        </div>
        <div className="relative flex-1 overflow-hidden">
          <div className="-mt-[3px]">
            {KEYS.map((k) => (
              <div key={k} className={`h-[18px] border-b border-[#293843] ${k.includes("#") ? "bg-[#2c3b45]" : "bg-[#34454f]"}`} />
            ))}
          </div>
          <ColumnLines />
          <div className="absolute bottom-0 left-[604px] top-0 w-[1px] bg-[#71808a]" />
          {NOTES.map((note) => (
            <div
              key={`${note.n}-${note.x}`}
              className="absolute h-[17px] w-[52px] rounded-[2px] border border-[#5f9470] bg-gradient-to-br from-[#a4d6a6] to-[#b8e2ba] pl-[1px] text-[9px] leading-[15px] text-[#4f8a72]"
              style={{ left: note.x, top: note.y }}
            >
              <span className={SANS}>{note.n}</span>
            </div>
          ))}
        </div>
        <div className="flex w-[21px] shrink-0 flex-col bg-[#3f4448] bg-[radial-gradient(#4a4f53_1px,transparent_1px)] bg-[length:3px_3px]">
          <div className="mx-[1px] mt-[252px] h-[32px] rounded-[1px] bg-[#5c6268]" />
          <div className="mt-auto flex h-[20px] items-center justify-center border border-[#5f676d] bg-[#4d5359]">
            <svg width="11" height="6" viewBox="0 0 11 6" fill="none" stroke="#1f2529" strokeWidth="1.200"><path d="M1 0l4.500 5L10 0" /></svg>
          </div>
        </div>
      </div>
      {/* splitter */}
      <div className="flex h-[10px] shrink-0 items-center justify-center border-y border-[#2b3237] bg-[#42494f]">
        <div className="h-[2px] w-[18px] bg-[repeating-linear-gradient(90deg,#6a7278_0_2px,transparent_2px_4px)]" />
      </div>
      {/* control lane */}
      <div className="flex min-h-0 flex-1">
        <div className="flex h-full w-[73px] shrink-0 items-start bg-[#3f474d] pl-[13px] pt-[2px]">
          <span className={`${SANS} text-[14px] text-[#c6d2d8]`}>Control</span>
          <div className="ml-[4px] mt-[5px] h-0 w-0 border-y-[4px] border-l-[4px] border-y-transparent border-l-[#7e868c]" />
        </div>
        <div className="relative flex-1 overflow-hidden border-l border-t border-[#1e282f] bg-[#34454f]">
          <div className="absolute inset-x-0 top-[28px] h-[1px] bg-[#293843]" />
          <div className="absolute inset-x-0 top-[56px] h-[1px] bg-[#293843]" />
          <ColumnLines />
          <span className={`${SANS} absolute left-[7px] top-[2px] text-[14px] text-[#465660]`}>Velocity</span>
          <svg className="absolute inset-0" width="1067" height="76" viewBox="0 0 1067 76" fill="none">
            {VELOCITY.map(([x, y, end]) => (
              <g key={x}>
                <path d={`M${x} ${y}V76`} stroke="#a9e2b0" strokeWidth="3" />
                <path d={`M${x} ${y}H${end}`} stroke="#a9e2b0" strokeWidth="1.400" />
                <circle cx={x} cy={y} r="3.500" fill="#4d8a5c" stroke="#6fa67e" />
              </g>
            ))}
          </svg>
        </div>
        <div className="flex w-[21px] shrink-0 flex-col bg-[#3f4448] bg-[radial-gradient(#4a4f53_1px,transparent_1px)] bg-[length:3px_3px]">
          <div className="flex h-[20px] items-center justify-center border border-[#5f676d] bg-[#4d5359]">
            <div className="h-[1px] w-[3px] bg-[#1f2529]" />
          </div>
          <div className="ml-auto mt-[28px] h-[28px] w-[9px] rounded-tl-[3px] border border-[#232a30] bg-[#333b44] bg-[repeating-linear-gradient(0deg,#d8b058_0_1px,transparent_1px_3px)]" />
        </div>
      </div>
    </div>
  );
}

function RiffMenu() {
  return (
    <div className="absolute left-[229px] top-[107px] w-[227px] border-2 border-[#1c2329] bg-[#bcc4ca] py-[1px] shadow-[0_0_2px_#11161a]">
      {RIFF_MENU.map((item, i) =>
        item ? (
          <div
            key={item.label}
            className={`flex items-center justify-between pr-[16px] text-[11.500px] font-['Roboto',sans-serif] ${
              item.active
                ? "mx-[1px] h-[20px] border border-[#8b959b] bg-[#5c6a72] pl-[17px] text-[#ced8dc]"
                : "h-[19px] pl-[17px] text-[#232a31]"
            }`}
          >
            <span>{item.label}</span>
            <span className={`italic ${item.active ? "text-[#aab4ba]" : "text-[#566069]"}`}>{item.keys}</span>
          </div>
        ) : (
          <div key={`sep-${i}`} className="flex h-[6px] items-center px-[2px]">
            <div className="h-[1px] w-full bg-[#8d969c]" />
          </div>
        )
      )}
    </div>
  );
}

export default function App() {
  return (
    <div className="relative flex h-[689px] w-[1366px] flex-col overflow-hidden bg-[#41484e]">
      <Toolbar />
      <div className="flex min-h-0 flex-1">
        <Browser />
        <PianoRoll />
      </div>
      <RiffMenu />
      {/* thumbnail curve over the top of the keyboard */}
      <svg className="absolute left-[206px] top-[108px]" width="24" height="38" viewBox="0 0 24 38">
        <path d="M0 37C6 22 12 8 23 0V37Z" fill="#98ca9e" />
        <path d="M0 37.500H24" stroke="#1f282e" />
      </svg>
    </div>
  );
}
